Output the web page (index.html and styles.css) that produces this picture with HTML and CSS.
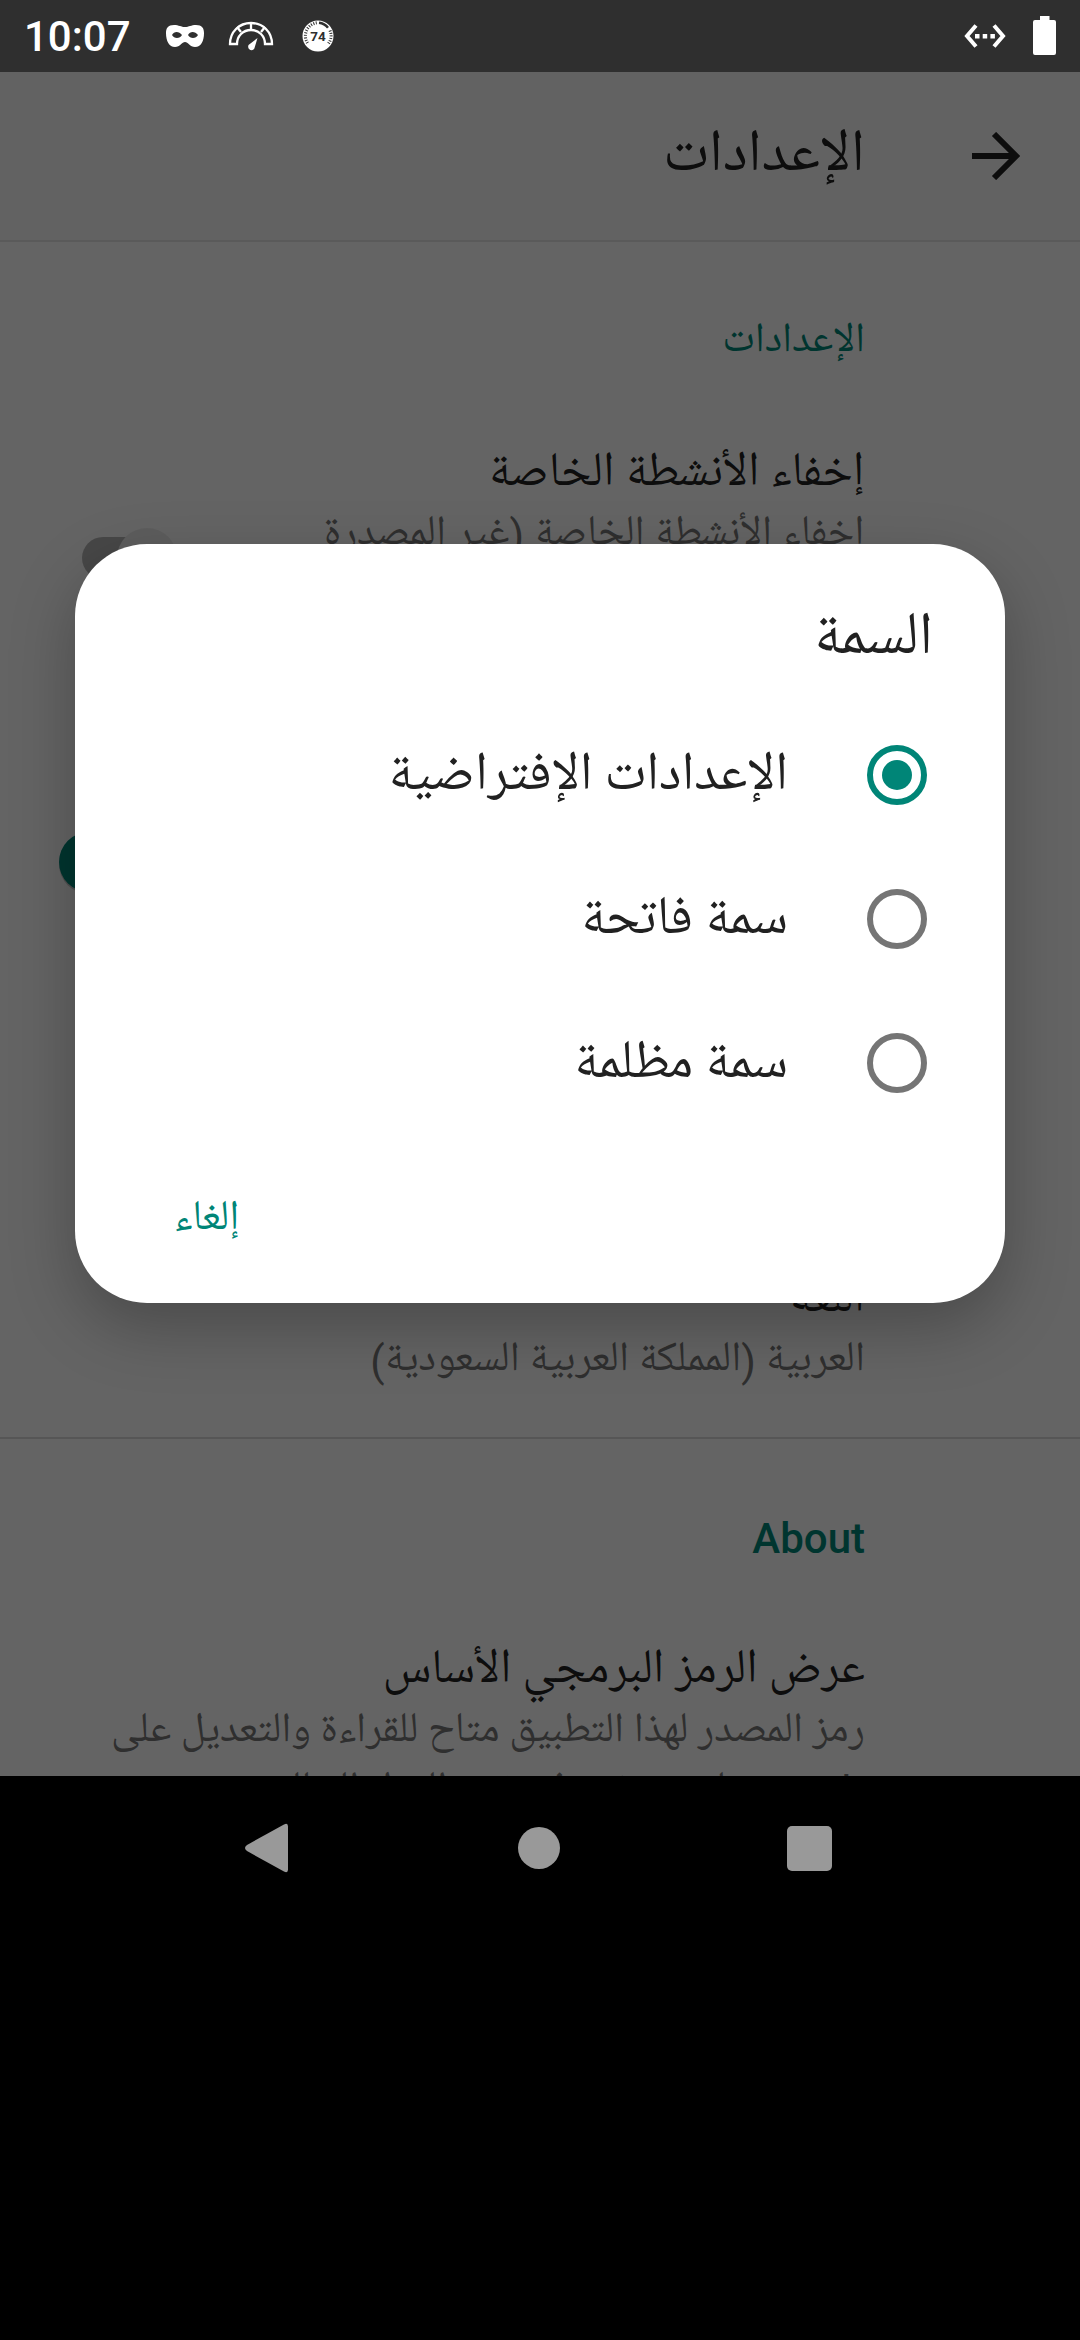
FILE: index.html
```
<!DOCTYPE html>
<html lang="ar">
<head>
<meta charset="utf-8">
<title>الإعدادات</title>
<link rel="stylesheet" href="styles.css">
</head>
<body>
<div class="screen">
  <header class="status">
    <span class="clock">10:07</span>
    <svg class="mask" width="40" height="24" viewBox="0 0 40 24"><path fill="#fff" fill-rule="evenodd" d="M9 1c5 0 7 2 11 2s6-2 11-2c6 0 8 3 8 8 0 8-3 14-9 14-5 0-7-5-10-5s-5 5-10 5C4 23 1 17 1 9c0-5 2-8 8-8ZM7 11c2 4 8 4 10 0-3-4-8-4-10 0Zm16 0c2 4 8 4 10 0-3-4-8-4-10 0Z"/></svg>
    <svg class="gauge" width="46" height="30" viewBox="0 0 46 30"><g fill="none" stroke="#fff" stroke-width="2.300"><path d="M2 23C2 11 11 2 23 2s21 9 21 21h-7c0-8-6-14-14-14S9 15 9 23Z"/><path d="M23 2v7M9 6l4 5M37 6l-4 5"/></g><path fill="#fff" d="M29.500 17 26.500 27c-1 4-8 2-6-3Z"/></svg>
    <svg class="badge" width="32" height="32" viewBox="0 0 32 32"><circle cx="16" cy="16" r="15.5" fill="#fff"/><path d="M5.5 23A13.2 13.2 0 0 1 15 2.8M28 10.500a13.200 13.200 0 0 1-1.500 13" fill="none" stroke="#2f2f2f" stroke-width="3" stroke-dasharray="1 1.500"/><path d="M17 2.800a13.200 13.200 0 0 1 9 5" fill="none" stroke="#2f2f2f" stroke-width="2.500"/><text x="16" y="20.800" text-anchor="middle">74</text></svg>
    <span class="spacer"></span>
    <svg class="ethernet" width="42" height="24" viewBox="0 0 42 24"><path d="M12 1.500 3 12l9 10.500M30 1.500 39 12l-9 10.500" fill="none" stroke="#fff" stroke-width="4"/><path fill="#fff" d="M11 10h4.500v4.500H11zM18.700 10h4.500v4.500h-4.500zM26.400 10h4.500v4.500h-4.500z"/></svg>
    <svg class="battery" width="23" height="39" viewBox="0 0 23 39"><path fill="#fff" d="M7 0h9.500v4H21a2 2 0 0 1 2 2v31a2 2 0 0 1-2 2H2a2 2 0 0 1-2-2V6a2 2 0 0 1 2-2h5z"/></svg>
  </header>

  <main class="app" dir="rtl">
    <div class="appbar">
      <svg class="back" width="48" height="48" viewBox="0 0 48 48"><path d="M0 24h44M22 2l22 22-22 22" fill="none" stroke="#212121" stroke-width="6"/></svg>
      <h1>الإعدادات</h1>
    </div>

    <section>
      <h2>الإعدادات</h2>
      <div class="row toggle">
        <div class="copy">
          <h3>إخفاء الأنشطة الخاصة</h3>
          <p>إخفاء الأنشطة الخاصة <span class="latin">(</span>غير المصدرة</p>
        </div>
        <svg class="switch" width="146" height="66" viewBox="0 0 146 66"><rect x="23" y="12" width="94" height="42" rx="21" fill="#b2b2b2"/><circle cx="88" cy="33" r="30" fill="#e9e9e9"/></svg>
      </div>
      <div class="row toggle">
        <svg class="switch on" width="146" height="66" viewBox="0 0 146 66"><rect x="23" y="12" width="94" height="42" rx="21" fill="#80c2bb"/><circle cx="30" cy="35" r="30" fill="#c4c4c4"/><circle cx="30" cy="33" r="30" fill="#008577"/></svg>
      </div>
      <div class="row theme"></div>
      <div class="row language">
        <h3>اللغة</h3>
        <p>العربية <span class="latin">(</span>المملكة العربية السعودية<span class="latin">)</span></p>
      </div>
    </section>

    <section class="about">
      <h2 class="latin">About</h2>
      <div class="row source">
        <h3>عرض الرمز البرمجي الأساس</h3>
        <p>رمز المصدر لهذا التطبيق متاح للقراءة والتعديل على</p>
        <p class="more"><span class="latin">GitHub</span> لمن يرغب في نشر العمل الحالي</p>
      </div>
    </section>

    <div class="scrim"></div>
    <div class="dialog">
      <h2 class="dialog-title">السمة</h2>
      <div class="option">
        <svg width="60" height="60" viewBox="0 0 60 60"><circle cx="30" cy="30" r="27" fill="none" stroke="#008577" stroke-width="6"/><circle cx="30" cy="30" r="15" fill="#008577"/></svg>
        <span>الإعدادات الإفتراضية</span>
      </div>
      <div class="option">
        <svg width="60" height="60" viewBox="0 0 60 60"><circle cx="30" cy="30" r="27" fill="none" stroke="#757575" stroke-width="6"/></svg>
        <span>سمة فاتحة</span>
      </div>
      <div class="option">
        <svg width="60" height="60" viewBox="0 0 60 60"><circle cx="30" cy="30" r="27" fill="none" stroke="#757575" stroke-width="6"/></svg>
        <span>سمة مظلمة</span>
      </div>
      <div class="actions"><span>إلغاء</span></div>
    </div>
  </main>

  <nav class="navbar">
    <svg width="48" height="52" viewBox="0 0 48 52"><path fill="#999" d="M4 23 41 2.500q4-2 4 2v43q0 4-4 2L4 29q-4-3 0-6Z"/></svg>
    <svg width="42" height="42" viewBox="0 0 42 42"><circle cx="21" cy="21" r="21" fill="#999"/></svg>
    <svg width="45" height="45" viewBox="0 0 45 45"><rect width="45" height="45" rx="5" fill="#999"/></svg>
  </nav>
</div>
</body>
</html>
```
FILE: styles.css
```
* { box-sizing: border-box; margin: 0; padding: 0; }

body { background: #000; }
svg { display: block; flex: none; }
h1, h2, h3 { font-weight: 400; }

.screen {
  width: 1080px;
  height: 2340px;
  overflow: hidden;
  background: #000;
  font-family: "Noto Naskh Arabic UI", "Noto Naskh Arabic", Roboto, sans-serif;
}

.latin { font-family: Roboto, sans-serif; }

/* status bar */
.status {
  display: flex;
  align-items: center;
  height: 72px;
  padding: 0 24px;
  background: #2f2f2f;
  color: #fff;
}
.clock { width: 141px; font: 500 42px/72px Roboto, sans-serif; padding-top: 2px; }
.gauge { margin-left: 23px; }
.badge { margin-left: 28px; }
.badge text { font: 700 13.5px Roboto, sans-serif; fill: #2f2f2f; }
.spacer { flex: 1; }
.battery { margin-left: 27px; margin-top: -2px; }

/* app */
.app {
  position: relative;
  height: 1704px;
  overflow: hidden;
  background: #fafafa;
}
.appbar {
  display: flex;
  align-items: center;
  height: 170px;
  padding-right: 60px;
  background: #f6f6f6;
  border-bottom: 2px solid #e0e0e0;
}
.appbar h1 {
  margin-right: 107px;
  color: #212121;
  font-size: 59.5px;
  line-height: 118px;
  padding-bottom: 2px;
}

section h2 {
  height: 164px;
  padding: 57px 215px 0 0;
  color: #008577;
  font-size: 42px;
  line-height: 84px;
}
.row { padding-right: 215px; }
.row h3 { color: #212121; font-size: 48px; line-height: 64px; word-spacing: .5px; }
.row p {
  margin-top: -3px;
  color: #757575;
  font-size: 42px;
  line-height: 63px;
  white-space: nowrap;
  word-spacing: .3px;
}
.row p .latin { line-height: 0; }
.row .more { margin-top: -4px; }
.toggle {
  display: flex;
  align-items: center;
  justify-content: space-between;
  height: 304px;
  padding-left: 59px;
}
.toggle .copy { align-self: flex-start; padding-top: 35px; }
.toggle p { word-spacing: 1px; }
.switch.on { margin-right: auto; }
.theme { height: 216px; }
.language { height: 207px; padding-top: 37px; }
.about { border-top: 2px solid #d8d8d8; }
.about h2 { height: 199px; padding-top: 58px; font-weight: 500; }

.scrim {
  position: absolute;
  inset: 0;
  background: rgba(0, 0, 0, .6);
}

/* dialog */
.dialog {
  position: absolute;
  left: 75px;
  top: 472px;
  width: 930px;
  height: 759px;
  padding: 0 72px;
  border-radius: 72px;
  background: #fff;
  color: #212121;
  box-shadow: 0 24px 64px rgba(0, 0, 0, .26);
}
.dialog-title { height: 159px; padding-top: 48px; font-size: 60px; line-height: 92px; }
.option {
  display: flex;
  align-items: center;
  gap: 79px;
  height: 144px;
  padding-right: 6px;
  font-size: 54px;
}
.option span { line-height: 144px; }
.actions {
  display: flex;
  justify-content: flex-end;
  padding: 42px 0 0 27px;
  color: #008577;
  font-size: 42px;
  line-height: 84px;
}

/* system navigation */
.navbar {
  display: flex;
  align-items: center;
  justify-content: space-between;
  height: 144px;
  padding: 0 248px 0 243px;
}
```
